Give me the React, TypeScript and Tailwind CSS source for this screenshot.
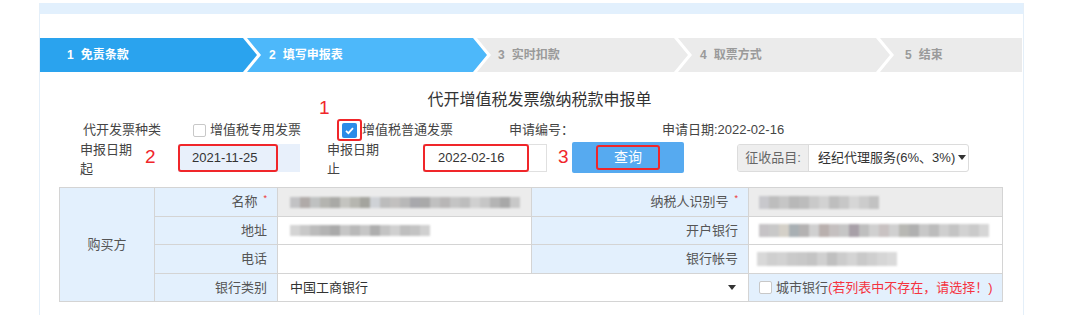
import { ReactNode } from 'react';

const font = "font-['Liberation_Sans','Noto_Sans_CJK_SC',sans-serif]";

const steps = [
  { n: 1, label: '免责条款', cls: 'w-[217px] pl-[27px] bg-[#2aa3ee] text-white [clip-path:polygon(0_0,calc(100%_-_14px)_0,100%_50%,calc(100%_-_14px)_100%,0_100%)]' },
  { n: 2, label: '填写申报表', cls: 'w-[240px] -ml-[10px] pl-[22px] bg-[#4db8fa] text-white [clip-path:polygon(0_0,calc(100%_-_14px)_0,100%_50%,calc(100%_-_14px)_100%,0_100%,14px_50%)]' },
  { n: 3, label: '实时扣款', cls: 'w-[211px] -ml-[10px] pl-[21px] bg-[#ebebeb] text-[#9a9a9a] [clip-path:polygon(0_0,calc(100%_-_14px)_0,100%_50%,calc(100%_-_14px)_100%,0_100%,14px_50%)]' },
  { n: 4, label: '取票方式', cls: 'w-[212px] -ml-[10px] pl-[22px] bg-[#ebebeb] text-[#9a9a9a] [clip-path:polygon(0_0,calc(100%_-_14px)_0,100%_50%,calc(100%_-_14px)_100%,0_100%,14px_50%)]' },
  { n: 5, label: '结束', cls: 'w-[142px] -ml-[10px] pl-[25px] bg-[#ebebeb] text-[#9a9a9a] [clip-path:polygon(0_0,100%_0,100%_100%,0_100%,14px_50%)]' },
];

// redacted (mosaic) content
function Blur({ colors, className = '' }: { colors: string[]; className?: string }) {
  return (
    <div className={`flex h-[11px] blur-[1.2px] ${className}`}>
      {colors.map((c, i) => (
        <div key={i} className="w-[10px] h-full" style={{ backgroundColor: c }} />
      ))}
    </div>
  );
}

const g1 = ['#c2c2c4', '#b0aaa8', '#bfc1c1', '#b4b4b0', '#a9a9a6', '#c4c4c0', '#b6b6b0', '#a4a49e', '#cfd2d6', '#bcbcbc', '#c2c0bf', '#b8b8b8', '#a8a8ac', '#a9a9a9', '#c0c0c0', '#b8b6b6', '#c4c4c4', '#bdbdbd', '#d0d0d0', '#c6c6c6', '#b4b4b4', '#a8a8a8', '#c8c8c8'];
const g2 = ['#c8c8cc', '#bdbdbd', '#c6c6c6', '#b8b8b8', '#bcbcbc', '#c9c9c9', '#d2d2d2', '#bebebe', '#c7c7c7', '#d6d6d6', '#cccccc', '#c2c2c2'];
const g3 = ['#d4d4d4', '#c8c8c8', '#bcbcbc', '#b4b4b4', '#aaaaaa', '#c6c6c6', '#b9b9b9', '#c6c6c6', '#aeaeae', '#c4c4c4', '#d0d0d0', '#bfbfbf', '#c3c3c3', '#d0d0d0'];
const g4 = ['#c6c3c6', '#c8c8c8', '#d4d0c8', '#a9b0b4', '#b4b2b2', '#d0d0d0', '#b9b0ae', '#c5c0c0', '#c6c6c6', '#a8a0a8', '#bfbfbf', '#d0d0d0', '#c9c2c2', '#d0d0d0', '#b8b8b4', '#b0b0b0', '#c8c8c8', '#bcbcbc', '#cfcfcf', '#c4c4c4', '#d2d2d2', '#cacaca', '#d6d6d6'];
const g5 = ['#d8d8d8', '#cfcfcf', '#d2d2d2', '#cacaca', '#c8c8c8', '#c4c4c4', '#d0d0d0', '#c0c0c0', '#cccccc', '#d4d4d4', '#c9c9c9', '#cfcfcf', '#d6d6d6', '#dadada'];

function Caret() {
  return (
    <svg width="8" height="5" viewBox="0 0 8 5" className="shrink-0">
      <path d="M0 0h8L4 5z" fill="#333" />
    </svg>
  );
}

function Label({ children, star = false }: { children: ReactNode; star?: boolean }) {
  return (
    <td className="border border-[#d4d4d4] bg-[#e3f0fd] text-right pr-[10px] text-[13px] text-[#555]">
      {children}
      {star && <span className="ml-[6px] text-[9px] align-top text-[#e33]">*</span>}
    </td>
  );
}

export default function App() {
  return (
    <div className={`w-[1080px] h-[315px] bg-white pt-[3px] pl-[39px] overflow-hidden ${font}`}>
      <div className="w-[985px] h-[320px] border-x border-[#e4eff9]">
        {/* top band */}
        <div className="h-[11px] bg-[#e2f0fd]" />

        {/* steps */}
        <div className="mt-[24px] flex h-[34px]">
          {steps.map((s) => (
            <div key={s.n} className={`h-full flex items-center text-[12px] font-bold ${s.cls}`}>
              <span>{s.n}</span>
              <span className="ml-[7px]">{s.label}</span>
            </div>
          ))}
        </div>

        {/* title */}
        <div className="mt-[17px] text-center text-[16px] leading-[22px] text-[#333] pl-[16px]">
          代开增值税发票缴纳税款申报单
        </div>

        {/* row 1 */}
        <div className="mt-[8px] ml-[43px] h-[22px] flex items-center text-[13px] text-[#444] whitespace-nowrap">
          <div className="w-[110px]">代开发票种类</div>
          <div className="w-[144px] flex items-center">
            <div className="w-[13px] h-[13px] border border-[#c8c8c8] rounded-[2px] bg-white" />
            <span className="ml-[4px]">增值税专用发票</span>
          </div>
          <div className="relative w-[25px] h-[22px] border-2 border-[#f0262a] rounded-[3px] flex items-center justify-center">
            <span className="absolute left-[-20px] top-[-23px] text-[19px] leading-none text-[#f0262a]">1</span>
            <div className="w-[15px] h-[15px] bg-[#2b8be8] rounded-[2px] flex items-center justify-center">
              <svg width="11" height="11" viewBox="0 0 11 11">
                <path d="M2 5.8l2.4 2.3L9 3.2" stroke="white" strokeWidth="1.8" fill="none" />
              </svg>
            </div>
          </div>
          <div className="w-[147px]">增值税普通发票</div>
          <div className="w-[153px]">申请编号：</div>
          <div>申请日期:2022-02-16</div>
        </div>

        {/* row 2 */}
        <div className="mt-[1px] ml-[40px] h-[31px] flex items-center text-[13px] text-[#444] whitespace-nowrap">
          <div className="w-[65px] leading-[19px] pt-[3px]">
            申报日期
            <br />起
          </div>
          <div className="w-[33px] text-[19px] text-[#f0262a]">2</div>
          <div className="relative w-[122px] h-[28px] bg-[#e8f0fb] flex items-center pl-[14px] text-[#333]">
            <div className="absolute left-0 top-0 w-[100px] h-[28px] border-2 border-[#f0262a] rounded-[3px]" />
            2021-11-25
          </div>
          <div className="ml-[27px] w-[96px] leading-[19px] pt-[3px]">
            申报日期
            <br />止
          </div>
          <div className="relative w-[124px] h-[28px] border border-[#e0e0e0] bg-white flex items-center pl-[14px] text-[#333]">
            <div className="absolute -left-px -top-px w-[106px] h-[28px] border-2 border-[#f0262a] rounded-[3px]" />
            2022-02-16
          </div>
          <div className="ml-[11px] w-[14px] text-[19px] text-[#f0262a]">3</div>
          <div className="w-[112px] h-[31px] bg-[#56aaf0] rounded-[2px] flex items-center justify-center">
            <div className="w-[64px] h-[25px] border-2 border-[#f0262a] rounded-[3px] flex items-center justify-center text-white text-[14px]">
              查询
            </div>
          </div>
          <div className="ml-[53px] w-[232px] h-[28px] border border-[#dcdcdc] rounded-[3px] flex items-center overflow-hidden">
            <div className="w-[71px] shrink-0 h-full bg-[#eeeeee] border-r border-[#dcdcdc] flex items-center justify-center text-[#666]">
              征收品目:
            </div>
            <div className="flex items-center pl-[9px] text-[#333]">
              经纪代理服务(6%、3%)
              <span className="ml-[3px]">
                <Caret />
              </span>
            </div>
          </div>
        </div>

        {/* buyer table */}
        <table className="mt-[14px] ml-[19px] w-[943px] table-fixed border-collapse border border-[#d4d4d4] text-[13px] text-[#555]">
          <colgroup>
            <col className="w-[95px]" />
            <col className="w-[123px]" />
            <col className="w-[254px]" />
            <col className="w-[217px]" />
            <col className="w-[254px]" />
          </colgroup>
          <tbody>
            <tr className="h-[29px]">
              <td rowSpan={4} className="border border-[#d4d4d4] bg-[#e3f0fd] text-center">
                购买方
              </td>
              <Label star>名称</Label>
              <td className="border border-[#d4d4d4] bg-[#ececec] pl-[12px]">
                <Blur colors={g1} />
              </td>
              <Label star>纳税人识别号</Label>
              <td className="border border-[#d4d4d4] bg-[#ececec] pl-[10px]">
                <Blur colors={g2} className="rounded-[5px] h-[13px]" />
              </td>
            </tr>
            <tr className="h-[28px]">
              <Label>地址</Label>
              <td className="border border-[#d4d4d4] bg-white pl-[12px]">
                <Blur colors={g3} />
              </td>
              <Label>开户银行</Label>
              <td className="border border-[#d4d4d4] bg-white pl-[10px]">
                <Blur colors={g4} className="rounded-[6px] h-[13px]" />
              </td>
            </tr>
            <tr className="h-[29px]">
              <Label>电话</Label>
              <td className="border border-[#d4d4d4] bg-white" />
              <Label>银行帐号</Label>
              <td className="border border-[#d4d4d4] bg-white pl-[8px]">
                <Blur colors={g5} className="h-[14px]" />
              </td>
            </tr>
            <tr className="h-[28px]">
              <Label>银行类别</Label>
              <td colSpan={2} className="border border-[#d4d4d4] bg-white px-[12px]">
                <div className="flex items-center justify-between text-[#333]">
                  <span>中国工商银行</span>
                  <Caret />
                </div>
              </td>
              <td className="border border-[#d4d4d4] bg-[#e3f0fd] pl-[10px]">
                <div className="flex items-center whitespace-nowrap">
                  <div className="w-[13px] h-[13px] border border-[#c8c8c8] rounded-[2px] bg-white" />
                  <span className="ml-[4px]">城市银行</span>
                  <span className="text-[#f5333f]">(若列表中不存在，请选择！)</span>
                </div>
              </td>
            </tr>
          </tbody>
        </table>
      </div>
    </div>
  );
}
